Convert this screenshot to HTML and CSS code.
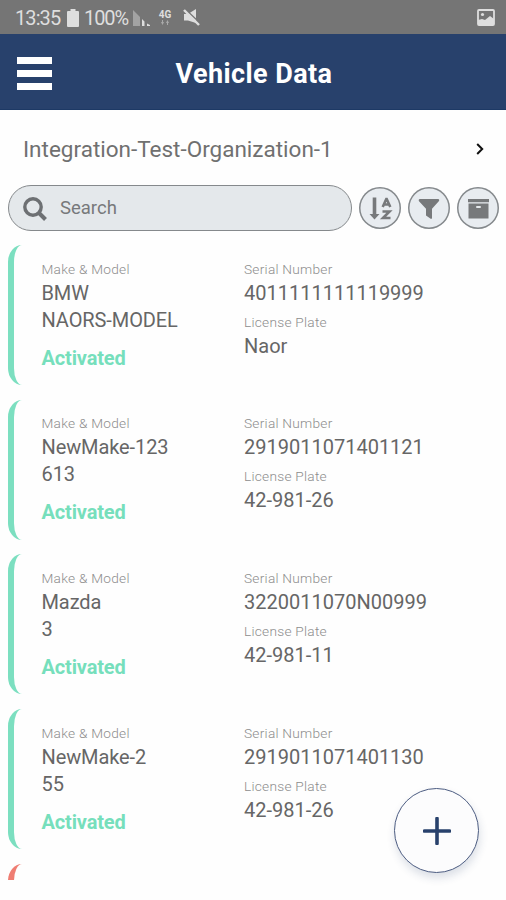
FILE: index.html
```html
<!DOCTYPE html>
<html lang="en">
<head>
<meta charset="utf-8">
<title>Vehicle Data</title>
<link rel="stylesheet" href="styles.css">
</head>
<body>
<div class="status">
  <span class="clock">13:35</span>
  <svg class="battery" width="12" height="18" viewBox="0 0 12 18"><path fill="currentColor" d="M3.500 0h5v2H11q1 0 1 1v14q0 1-1 1H1q-1 0-1-1V3q0-1 1-1h2.500z"/></svg>
  <span class="percent">100%</span>
  <svg class="signal" width="18" height="16" viewBox="0 0 18 16"><path fill="#a3a3a3" d="M0 0l7 7v9H0z"/><path fill="#dedede" d="M9 9l2.500 2.500V16H9zM14 13.500l3 1.500v1h-3z"/></svg>
  <span class="network"><b>4G</b><svg width="10" height="5" viewBox="0 0 10 5"><path fill="#aaa" d="M2 0h1v2h1L2.500 5 1 2h1zM7 5h1V3h1L7.500 0 6 3h1z"/></svg></span>
  <svg class="mute" width="17" height="17" viewBox="0 0 17 17"><path fill="currentColor" d="M1 5h4l8-5v14L5 11.500H1z"/><path stroke="#757575" stroke-width="1.500" d="M2 0l15 14"/><path stroke="currentColor" stroke-width="2.400" d="M1 1l15 15"/></svg>
  <svg class="picture" width="18" height="17" viewBox="0 0 18 17"><rect x="1" y="1" width="16" height="15" rx="1" fill="none" stroke="currentColor" stroke-width="1.800"/><path fill="currentColor" d="M1 11l4-1 3 1 5-4 4 3v6H1z"/><circle cx="5.500" cy="5.500" r="1.600" fill="currentColor"/></svg>
</div>
<header class="header">
  <div class="menu"><i></i><i></i><i></i></div>
  <h1>Vehicle Data</h1>
</header>
<div class="organization">
  <span>Integration-Test-Organization-1</span>
  <svg width="8" height="12" viewBox="0 0 8 12"><path d="M1.200 1l5 5-5 5" fill="none" stroke="#111" stroke-width="2"/></svg>
</div>
<div class="tools">
  <div class="search">
    <svg width="24" height="24" viewBox="0 0 24 24" fill="none" stroke="currentColor"><circle cx="10" cy="10" r="8.200" stroke-width="3.400"/><path d="M16 16l6.500 6.500" stroke-width="4"/></svg>
    <span>Search</span>
  </div>
  <div class="tool"><svg width="42" height="42" viewBox="0 0 42 42"><path fill="none" stroke="currentColor" stroke-width="3.600" d="M15.500 10.500v18"/><path fill="currentColor" d="M10.500 27h10l-5 5.500z"/><path fill="none" stroke="currentColor" stroke-width="2.600" d="M23.700 20L27.300 12h.400l3.600 8M25 17.500h5M23.500 24.500h7l-6.500 6.500h7.500"/></svg></div>
  <div class="tool"><svg width="42" height="42" viewBox="0 0 42 42"><path fill="currentColor" d="M11.500 12h19q1.500 1 .3 2.300L24 21.700V31q-.5 1.500-1.700.6L18 28.500v-6.800l-7-7.400q-1-1.300.5-2.300z"/></svg></div>
  <div class="tool"><svg width="42" height="42" viewBox="0 0 42 42"><path fill="currentColor" d="M11 12h21v3.300H11zM11.500 16.500h20v15h-20z"/><rect x="19" y="19" width="5" height="2" rx="1" fill="#e4e8eb"/></svg></div>
</div>
<main class="list">
  <article class="card">
    <div class="model"><small>Make &amp; Model</small><p>BMW</p><p>NAORS-MODEL</p><strong>Activated</strong></div>
    <div class="details"><small>Serial Number</small><p>4011111111119999</p><small>License Plate</small><p>Naor</p></div>
  </article>
  <article class="card">
    <div class="model"><small>Make &amp; Model</small><p>NewMake-123</p><p>613</p><strong>Activated</strong></div>
    <div class="details"><small>Serial Number</small><p>2919011071401121</p><small>License Plate</small><p>42-981-26</p></div>
  </article>
  <article class="card">
    <div class="model"><small>Make &amp; Model</small><p>Mazda</p><p>3</p><strong>Activated</strong></div>
    <div class="details"><small>Serial Number</small><p>3220011070N00999</p><small>License Plate</small><p>42-981-11</p></div>
  </article>
  <article class="card">
    <div class="model"><small>Make &amp; Model</small><p>NewMake-2</p><p>55</p><strong>Activated</strong></div>
    <div class="details"><small>Serial Number</small><p>2919011071401130</p><small>License Plate</small><p>42-981-26</p></div>
  </article>
  <article class="card inactive"></article>
</main>
<div class="add"><svg width="28" height="28" viewBox="0 0 28 28"><path d="M14 1.500v25M1.500 14h25" stroke="#28416c" stroke-width="3.600" stroke-linecap="round"/></svg></div>
</body>
</html>
```
FILE: styles.css
```css
* { box-sizing: border-box; }
body {
  margin: 0;
  height: 900px;
  overflow: hidden;
  position: relative;
  display: flex;
  flex-direction: column;
  background: #fefefe;
  color: #666;
  font-family: Roboto, "Liberation Sans", sans-serif;
}
svg { display: block; flex: none; }
p, h1 { margin: 0; }
.status {
  height: 34px;
  flex: none;
  display: flex;
  align-items: center;
  padding: 1px 12px 0 15px;
  background: #757575;
  color: #dedede;
  font-size: 20px;
}
.clock { width: 52px; letter-spacing: -0.9px; }
.percent { width: 50px; margin-left: 5px; letter-spacing: -1.1px; }
.signal { margin-left: -1px; }
.network { width: 14px; margin-left: 7px; display: flex; flex-direction: column; align-items: center; }
.network b { font-size: 10px; line-height: 10px; }
.mute { margin-left: 11px; }
.picture { margin-left: auto; margin-right: -1px; }
.header {
  height: 76px;
  flex: none;
  display: grid;
  grid-template-columns: 36px 1fr 36px;
  align-items: center;
  padding: 4px 15px 0 17px;
  background: #28416c;
  border-bottom: 1px solid #1d3965;
  color: #fff;
}
.menu { display: grid; gap: 6px; width: 35px; }
.menu i { height: 7px; background: #fff; }
h1 { text-align: center; font-size: 27px; line-height: 34px; font-weight: 700; letter-spacing: 0.4px; padding-top: 1px; }
.organization {
  height: 75px;
  flex: none;
  display: flex;
  align-items: center;
  justify-content: space-between;
  padding: 3px 22px 0 23px;
  font-size: 22.5px;
  color: #707070;
}
.tools { flex: none; height: 46px; display: flex; align-items: center; gap: 7px; padding: 0 6px 0 8px; }
.search {
  width: 344px;
  height: 46px;
  display: flex;
  align-items: center;
  padding-left: 14px;
  gap: 13px;
  border: 1.5px solid #85898c;
  border-radius: 23px;
  background: #e4e8eb;
  color: #77797b;
  font-size: 18.5px;
}
.search svg { color: #6d7073; margin-top: 2px; }
.tool { width: 42px; height: 42px; flex: none; border-radius: 50%; background: #e8ecf0; color: #77797b; box-shadow: inset 0 0 0 1.5px #85898c; }
.list { height: 649px; flex: none; overflow: hidden; padding: 14px 8px 0; display: flex; flex-direction: column; gap: 14.7px; }
.card {
  height: 140px;
  flex: none;
  display: grid;
  grid-template-columns: 202.5px 1fr;
  padding: 14.5px 0 0 27.5px;
  border-left: 6px solid #7cdfc0;
  border-radius: 14px / 17px;
}
.card.inactive { border-color: #ef7d72; }
small { display: block; font-size: 13.7px; line-height: 18px; font-weight: 300; letter-spacing: 0.25px; color: #8d8d8d; }
.card p { font-size: 20px; line-height: 30px; }
.model p { letter-spacing: -0.1px; }
.model p + p { line-height: 24px; }
.details small + p { margin-bottom: 5px; }
strong { display: block; margin-top: 13px; font-size: 20px; line-height: 27px; letter-spacing: -0.15px; color: #76dfbc; }
.add {
  position: absolute;
  right: 27px;
  bottom: 27px;
  width: 85px;
  height: 85px;
  display: flex;
  align-items: center;
  justify-content: center;
  border: 1.5px solid #4d5d82;
  border-radius: 50%;
  background: #fcfcfd;
  box-shadow: 1px 5px 9px rgba(40, 65, 108, .16);
}
```
